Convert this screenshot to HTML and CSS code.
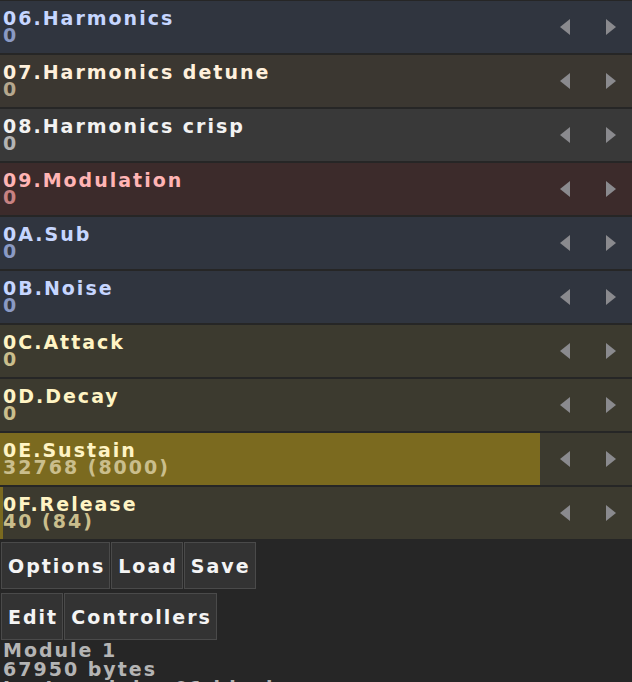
FILE: index.html
```html
<!DOCTYPE html>
<html>
<head>
<meta charset="utf-8">
<link rel="stylesheet" href="styles.css">
</head>
<body>
<div class="params">
  <div class="row blue">
    <div class="slider"><div class="fill" style="width:0px"></div><div class="label">06.Harmonics</div><div class="value">0</div></div>
    <div class="arrows"><svg class="arr" viewBox="0 0 10 16"><polygon points="10,0 10,16 0,8"/></svg><svg class="arr" viewBox="0 0 10 16"><polygon points="0,0 0,16 10,8"/></svg></div>
  </div>
  <div class="row brown">
    <div class="slider"><div class="fill" style="width:0px"></div><div class="label">07.Harmonics detune</div><div class="value">0</div></div>
    <div class="arrows"><svg class="arr" viewBox="0 0 10 16"><polygon points="10,0 10,16 0,8"/></svg><svg class="arr" viewBox="0 0 10 16"><polygon points="0,0 0,16 10,8"/></svg></div>
  </div>
  <div class="row gray">
    <div class="slider"><div class="fill" style="width:0px"></div><div class="label">08.Harmonics crisp</div><div class="value">0</div></div>
    <div class="arrows"><svg class="arr" viewBox="0 0 10 16"><polygon points="10,0 10,16 0,8"/></svg><svg class="arr" viewBox="0 0 10 16"><polygon points="0,0 0,16 10,8"/></svg></div>
  </div>
  <div class="row red">
    <div class="slider"><div class="fill" style="width:0px"></div><div class="label">09.Modulation</div><div class="value">0</div></div>
    <div class="arrows"><svg class="arr" viewBox="0 0 10 16"><polygon points="10,0 10,16 0,8"/></svg><svg class="arr" viewBox="0 0 10 16"><polygon points="0,0 0,16 10,8"/></svg></div>
  </div>
  <div class="row blue">
    <div class="slider"><div class="fill" style="width:0px"></div><div class="label">0A.Sub</div><div class="value">0</div></div>
    <div class="arrows"><svg class="arr" viewBox="0 0 10 16"><polygon points="10,0 10,16 0,8"/></svg><svg class="arr" viewBox="0 0 10 16"><polygon points="0,0 0,16 10,8"/></svg></div>
  </div>
  <div class="row blue">
    <div class="slider"><div class="fill" style="width:0px"></div><div class="label">0B.Noise</div><div class="value">0</div></div>
    <div class="arrows"><svg class="arr" viewBox="0 0 10 16"><polygon points="10,0 10,16 0,8"/></svg><svg class="arr" viewBox="0 0 10 16"><polygon points="0,0 0,16 10,8"/></svg></div>
  </div>
  <div class="row olive">
    <div class="slider"><div class="fill" style="width:0px"></div><div class="label">0C.Attack</div><div class="value">0</div></div>
    <div class="arrows"><svg class="arr" viewBox="0 0 10 16"><polygon points="10,0 10,16 0,8"/></svg><svg class="arr" viewBox="0 0 10 16"><polygon points="0,0 0,16 10,8"/></svg></div>
  </div>
  <div class="row olive">
    <div class="slider"><div class="fill" style="width:0px"></div><div class="label">0D.Decay</div><div class="value">0</div></div>
    <div class="arrows"><svg class="arr" viewBox="0 0 10 16"><polygon points="10,0 10,16 0,8"/></svg><svg class="arr" viewBox="0 0 10 16"><polygon points="0,0 0,16 10,8"/></svg></div>
  </div>
  <div class="row olive">
    <div class="slider"><div class="fill" style="width:540px"></div><div class="label">0E.Sustain</div><div class="value">32768 (8000)</div></div>
    <div class="arrows"><svg class="arr" viewBox="0 0 10 16"><polygon points="10,0 10,16 0,8"/></svg><svg class="arr" viewBox="0 0 10 16"><polygon points="0,0 0,16 10,8"/></svg></div>
  </div>
  <div class="row olive">
    <div class="slider"><div class="fill" style="width:3px"></div><div class="label">0F.Release</div><div class="value">40 (84)</div></div>
    <div class="arrows"><svg class="arr" viewBox="0 0 10 16"><polygon points="10,0 10,16 0,8"/></svg><svg class="arr" viewBox="0 0 10 16"><polygon points="0,0 0,16 10,8"/></svg></div>
  </div>
</div>
<div class="toolbar">
  <div class="btn">Options</div>
  <div class="btn">Load</div>
  <div class="btn">Save</div>
</div>
<div class="toolbar second">
  <div class="btn">Edit</div>
  <div class="btn">Controllers</div>
</div>
<div class="info">
  <div>Module 1</div>
  <div>67950 bytes</div>
  <div>Last module: 01 blocks</div>
</div>
</body>
</html>
```
FILE: styles.css
```css
html, body {
  margin: 0;
  padding: 0;
}
body {
  background: #262626;
  width: 632px;
  height: 682px;
  overflow: hidden;
  font-family: "DejaVu Sans", "Liberation Sans", sans-serif;
  font-weight: bold;
  font-size: 19px;
  letter-spacing: 2px;
}
.params {
  display: flex;
  flex-direction: column;
  gap: 2px;
  padding-top: 1px;
}
.row {
  display: flex;
  height: 52px;
}
.slider {
  position: relative;
  width: 540px;
  height: 52px;
}
.fill {
  position: absolute;
  left: 0;
  top: 0;
  bottom: 0;
}
.label, .value {
  position: relative;
  padding-left: 3px;
  line-height: 17px;
  white-space: nowrap;
}
.label {
  padding-top: 9px;
}
.arrows {
  flex: 1;
  display: flex;
  justify-content: flex-end;
  align-items: center;
  gap: 36px;
  padding-right: 16px;
}
.arr {
  width: 10px;
  height: 16px;
  fill: #8a8a8e;
}
.blue { background: #30353f; }
.blue .label { color: #c6d6ff; }
.blue .value { color: #8a9ac4; }
.brown { background: #3b3731; }
.brown .label { color: #fff0dc; }
.brown .value { color: #b6a88e; }
.gray { background: #393939; }
.gray .label { color: #f2f2f2; }
.gray .value { color: #b4b4b4; }
.red { background: #3c2b2b; }
.red .label { color: #ffb4b4; }
.red .value { color: #c88282; }
.olive { background: #3c3a2f; }
.olive .label { color: #fff4c4; }
.olive .value { color: #cabe8c; }
.olive .fill { background: #7b6a1f; }
.toolbar {
  display: flex;
  gap: 1px;
  padding-left: 1px;
  margin-top: 3px;
}
.toolbar.second {
  margin-top: 4px;
}
.btn {
  height: 47px;
  box-sizing: border-box;
  display: flex;
  align-items: center;
  padding: 0 4px 0 6px;
  background: #333333;
  border: 1px solid #4a4a4a;
  color: #f4f4f4;
}
.info {
  padding-left: 3px;
  line-height: 19px;
  color: #b4b4b4;
  margin-top: 1px;
  white-space: nowrap;
}
```
